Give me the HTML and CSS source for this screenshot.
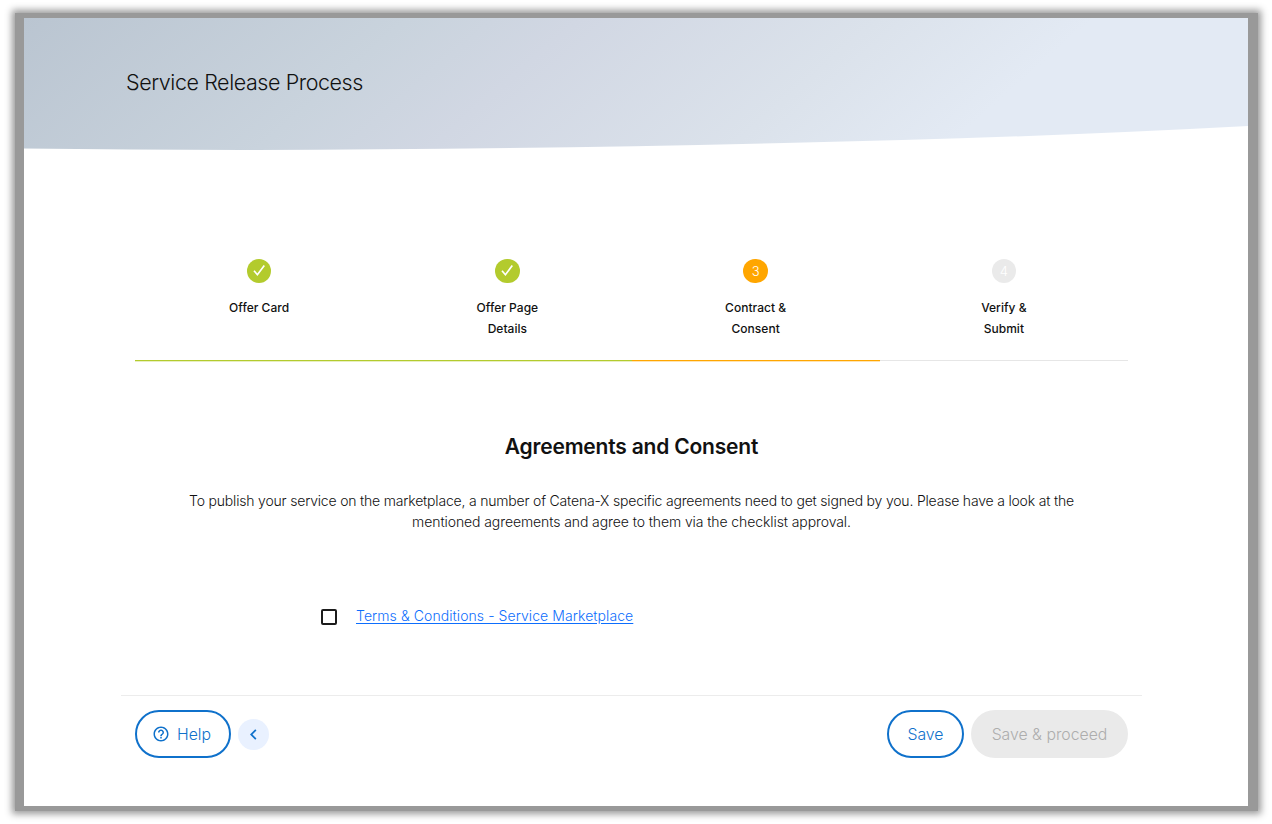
FILE: index.html
```html
<!DOCTYPE html>
<html lang="en">
<head>
<meta charset="utf-8">
<title>Service Release Process</title>
<link rel="stylesheet" href="styles.css">
</head>
<body>
<div class="frame">
  <div class="page">
    <header class="hero">
      <svg class="hero-bg" viewBox="0 0 1224 134" preserveAspectRatio="none" aria-hidden="true">
        <defs>
          <linearGradient id="sky" gradientUnits="userSpaceOnUse" x1="0" y1="0" x2="460" y2="530">
            <stop offset="0" stop-color="#bac5d1"/>
            <stop offset=".36" stop-color="#c9d3dd"/>
            <stop offset=".52" stop-color="#d1d7e3"/>
            <stop offset=".8" stop-color="#dbe2eb"/>
            <stop offset="1" stop-color="#e3eaf4"/>
          </linearGradient>
        </defs>
        <path fill="url(#sky)" d="M0 0H1224V108Q1000 120 760 125Q340 135 0 130.500Z"/>
      </svg>
      <h1 class="hero-title">Service Release Process</h1>
    </header>

    <main class="content">
      <ol class="stepper">
        <li class="step done">
          <span class="dot"><svg viewBox="0 0 24 24"><path d="M7 11.700L10.400 15.700L17.300 6.500"/></svg></span>
          <span class="step-label">Offer Card</span>
        </li>
        <li class="step done">
          <span class="dot"><svg viewBox="0 0 24 24"><path d="M7 11.700L10.400 15.700L17.300 6.500"/></svg></span>
          <span class="step-label">Offer Page<br>Details</span>
        </li>
        <li class="step active">
          <span class="dot">3</span>
          <span class="step-label">Contract &amp;<br>Consent</span>
        </li>
        <li class="step">
          <span class="dot">4</span>
          <span class="step-label">Verify &amp;<br>Submit</span>
        </li>
      </ol>

      <h2 class="heading">Agreements and Consent</h2>
      <p class="intro"><span class="intro-lead">To publish your service on the marketplace, a number of Catena-X specific agreements need to get signed by you. Please have a look at the</span><br><span class="intro-rest">mentioned agreements and agree to them via the checklist approval.</span></p>

      <div class="agreement">
        <span class="checkbox" role="checkbox" aria-checked="false"></span>
        <a class="terms" href="#">Terms &amp; Conditions - Service Marketplace</a>
      </div>
    </main>

    <footer class="actions">
      <button class="btn outline help">
        <svg class="help-icon" viewBox="0 0 24 24"><path d="M11 18h2v-2h-2v2zm1-16C6.480 2 2 6.480 2 12s4.480 10 10 10 10-4.480 10-10S17.520 2 12 2zm0 18c-4.410 0-8-3.590-8-8s3.590-8 8-8 8 3.590 8 8-3.590 8-8 8zm0-14c-2.210 0-4 1.790-4 4h2c0-1.100.9-2 2-2s2 .9 2 2c0 2-3 1.750-3 5h2c0-2.250 3-2.500 3-5 0-2.210-1.790-4-4-4z"/></svg>
        <span>Help</span>
      </button>
      <button class="back" aria-label="Back"><svg viewBox="0 0 24 24"><path d="M15.410 7.410 14 6l-6 6 6 6 1.410-1.410L10.830 12z"/></svg></button>
      <button class="btn outline save"><span>Save</span></button>
      <button class="btn disabled" disabled><span>Save &amp; proceed</span></button>
    </footer>
  </div>
</div>
</body>
</html>
```

FILE: styles.css
```css
* { box-sizing: border-box; }
body {
  margin: 0;
  height: 824px;
  padding: 13px 14px 13px 15px;
  overflow: hidden;
  background: #fff;
  color: #111;
  font-family: Inter, "Liberation Sans", sans-serif;
}
.frame {
  height: 798px;
  padding: 5px 10px 5px 9px;
  background: #999;
  box-shadow: 0 0 7px 3px #999;
}
.page {
  height: 788px;
  display: flex;
  flex-direction: column;
  background: #fff;
}

/* header */
.hero { height: 134px; display: grid; }
.hero-bg { grid-area: 1 / 1; width: 100%; height: 134px; }
.hero-title {
  grid-area: 1 / 1;
  z-index: 1;
  margin: 48px 0 0 102px;
  font-size: 21.500px;
  line-height: 33px;
  font-weight: 300;
  letter-spacing: -0.430px;
}

/* stepper */
.content { width: 993px; margin-left: 111px; padding-top: 106px; }
.stepper {
  display: grid;
  grid-template-columns: repeat(4, 1fr);
  height: 103px;
  margin: 0;
  padding: 0;
  list-style: none;
}
.step {
  display: flex;
  flex-direction: column;
  align-items: center;
  border-bottom: 1px solid #e6e6e6;
}
.step.done { border-bottom-color: #b3cb2d; box-shadow: 0 1px 0 #e8efc0; }
.step.active { border-bottom-color: #ffa600; box-shadow: 0 1px 0 #ffe4b3; }
.dot {
  display: flex;
  align-items: center;
  justify-content: center;
  width: 24.500px;
  height: 24.500px;
  margin-top: .5px;
  border-radius: 50%;
  background: #eaeaea;
  color: #fff;
  font-size: 13px;
  font-weight: 300;
}
.done .dot { background: #b3cb2d; }
.active .dot { background: #ffa600; }
.dot svg { width: 24px; height: 24px; fill: none; stroke: #fff; stroke-width: 1.700; }
.step-label {
  margin-top: 15px;
  text-align: center;
  font-size: 12px;
  line-height: 20.500px;
  font-weight: 500;
  letter-spacing: .03px;
}

/* agreements */
.heading {
  margin: 70px 0 0;
  text-align: center;
  font-size: 21px;
  line-height: 32px;
  font-weight: 600;
  letter-spacing: -0.2px;
}
.intro {
  margin: 27px 0 0;
  text-align: center;
  white-space: nowrap;
  font-size: 14px;
  line-height: 21px;
  font-weight: 300;
}
.intro-lead { letter-spacing: -0.190px; }
.intro-rest { letter-spacing: -0.090px; }
.agreement { display: flex; align-items: center; margin: 72px 0 0 186px; height: 24px; }
.checkbox { width: 16px; height: 16px; margin-top: 2px; border: 2px solid #1c1c1c; border-radius: 2px; }
.terms {
  margin-left: 19px;
  color: #0d6efd;
  font-size: 14px;
  line-height: 24px;
  font-weight: 300;
  letter-spacing: .075px;
  text-underline-offset: 2px;
}

/* actions */
.actions {
  display: flex;
  align-items: center;
  width: 1021px;
  height: 77px;
  margin: 67px 0 0 97px;
  padding: 0 14px;
  border-top: 1px solid #ececec;
}
button { font-family: inherit; margin: 0; padding: 0; }
.btn {
  display: flex;
  align-items: center;
  justify-content: center;
  height: 48px;
  border: 0;
  border-radius: 24px;
  font-size: 15.800px;
  font-weight: 300;
}
.outline { border: 2px solid #0f71cb; background: #fff; color: #0f71cb; }
.help { width: 96px; gap: 7px; padding-right: 3px; }
.help-icon { width: 18px; height: 18px; fill: #0f71cb; }
.back {
  display: flex;
  align-items: center;
  justify-content: center;
  width: 31px;
  height: 31px;
  margin-left: 7px;
  border: 0;
  border-radius: 50%;
  background: #e9f1ff;
}
.back svg { width: 21px; height: 21px; fill: #0f71cb; }
.save { width: 77px; margin-left: auto; }
.disabled { width: 157px; margin-left: 7px; background: #eaeaea; color: #adadad; }
```
